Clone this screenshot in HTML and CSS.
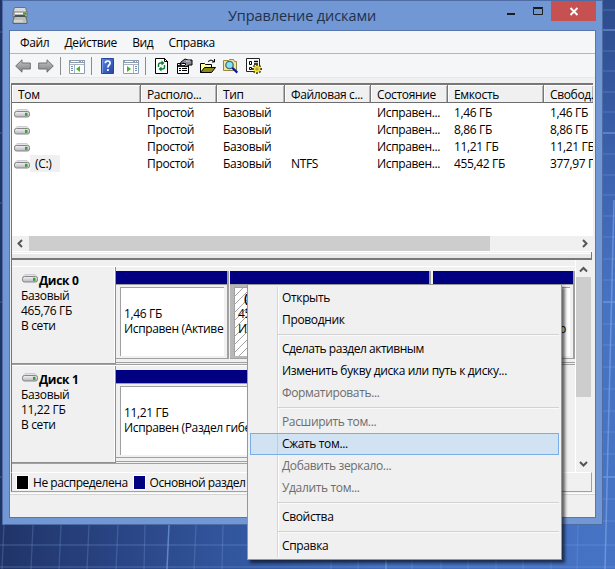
FILE: index.html
```html
<!DOCTYPE html>
<html lang="ru">
<head>
<meta charset="utf-8">
<title>Управление дисками</title>
<link rel="stylesheet" href="styles.css">
</head>
<body>
<svg width="0" height="0" class="defs">
  <defs>
    <linearGradient id="metal" x1="0" y1="0" x2="0" y2="1"><stop offset="0" stop-color="#f4f4f6"/><stop offset="1" stop-color="#b4b4ba"/></linearGradient>
    <linearGradient id="arrow" x1="0" y1="0" x2="0" y2="1"><stop offset="0" stop-color="#c8c8c8"/><stop offset="1" stop-color="#7c7c7c"/></linearGradient>
    <linearGradient id="help" x1="0" y1="0" x2="1" y2="1"><stop offset="0" stop-color="#5c86e0"/><stop offset="1" stop-color="#2444a4"/></linearGradient>
    <symbol id="drive" viewBox="0 0 16 10">
      <path d="M3 1.5h10l2.5 3H.5z" fill="#e4e4e5" stroke="#c4c4c6" stroke-width=".8"/>
      <rect x=".5" y="3.500" width="15" height="5.500" rx="2" fill="url(#metal)" stroke="#85858a"/>
      <rect x="11" y="4.800" width="2.500" height="3" fill="#2fa52a"/>
    </symbol>
    <pattern id="hatch" width="8" height="8" patternUnits="userSpaceOnUse"><path d="M-1 9L9-1M-1 1L1-1M7 9l2-2" stroke="#8c8c8c" stroke-width=".8"/></pattern>
  </defs>
</svg>
<div class="desktop">
  <svg class="wallpaper" width="615" height="569" viewBox="0 0 615 569" fill="none">
    <g stroke="#7ba0e0" stroke-opacity=".28" stroke-width="1.3">
      <path d="M4 525l-2 44M33 525l-2 44M61 525l-2 44M89 525l-2 44M118 525l-2 44M145 525l-1 44M196 525l-2 44M223 525l-1 44M331 559v10M358 559v10M412 559v10M441 559v10M468 559v10M496 559v10M523 559v10M551 559v10M578 525l-1 44"/>
      <path d="M603 10h12M603 51h12M603 71h12M603 92h12M603 112h12M603 154h12M603 175h12M603 195h12M603 216h12M603 237h12M603 259h12M603 280h12M603 324h12M603 345h12M603 367h12M603 389h12M603 411h12M603 432h12M603 454h12M603 499h12M603 521h12M0 545h615M0 567h615M0 32h2M0 133h2M0 203h2M0 302h2M0 477h2"/>
    </g>
    <path d="M169 525l-2 44M386 560v9M614 200l-9 369M603 30h12M603 133h12M603 302h12M603 477h12" stroke="#83abe9" stroke-opacity=".6" stroke-width="1.5"/>
  </svg>
  <main class="window">
    <header class="titlebar">
      <svg class="app-icon" width="16" height="17" viewBox="0 0 16 17">
        <path d="M2.500.5h11l1.500 5v4H1v-4z" fill="#d7dad9" stroke="#6c7471"/><path d="M2 5h12v3H2z" fill="#f8f8f8" stroke="#777"/>
        <path d="M11 5.500h3v2h-3z" fill="#28a824"/><path d="M2.500 9.500h11l1.500 4v3H1v-3z" fill="#b8bebb" stroke="#5e6663"/><path d="M3 8h10v2H3z" fill="#4b5350"/><path d="M2 14h9" stroke="#eee"/>
      </svg>
      <h1>Управление дисками</h1>
      <div class="caption-buttons">
        <svg width="30" height="20" viewBox="0 0 30 20"><path d="M8 13h8" stroke="#1c1c1c" stroke-width="2"/></svg>
        <svg width="22" height="20" viewBox="0 0 22 20"><path d="M4.500 7.500h9v6h-9zM4 6.500h10" fill="none" stroke="#1c1c1c"/></svg>
        <svg class="close" width="45" height="20" viewBox="0 0 45 20"><path d="M19.500 7l7 7M26.500 7l-7 7" stroke="#fff" stroke-width="1.900"/></svg>
      </div>
    </header>
    <div class="client">
      <nav class="menubar"><span>Файл</span><span>Действие</span><span>Вид</span><span>Справка</span></nav>
      <div class="toolbar">
        <svg width="16" height="16" viewBox="0 0 16 16"><path d="M.7 8L7 1.800V5h8.300v6H7v3.200z" fill="url(#arrow)" stroke="#707070"/></svg>
        <svg class="t2" width="16" height="16" viewBox="0 0 16 16"><path d="M15.300 8L9 1.800V5H.7v6H9v3.200z" fill="url(#arrow)" stroke="#707070"/></svg>
        <i class="sep s1"></i>
        <svg class="t3" width="16" height="16" viewBox="0 0 16 16"><path d="M.5 2.500h15v13H.5z" fill="#fff" stroke="#8e9db0"/><path d="M0 2h16v3H0z" fill="#8e9db0"/><path d="M2 3.500h8M12 3.500h1M14 3.500h1" stroke="#fff"/><path d="M1 6.500h14M5.500 7v8" stroke="#a8b4c2"/><path d="M2 8.500h2M2 10.500h2M2 12.500h2" stroke="#6689b6"/><path d="M11 8v6l-4-3z" fill="#45b42b"/></svg>
        <i class="sep s2"></i>
        <svg class="t4" width="13" height="16" viewBox="0 0 13 16"><path d="M.5.5h12v15H.5z" fill="url(#help)" stroke="#2846a0"/><path d="M1.500 1v14" stroke="#7398e5"/><path d="M4.300 5.200Q4.500 3 6.800 3t2.300 2.100c0 1.700-2.200 1.900-2.200 4.300M6.900 11v2" fill="none" stroke="#fff" stroke-width="1.700"/></svg>
        <svg class="t5" width="16" height="16" viewBox="0 0 16 16"><path d="M.5 2.500h15v13H.5z" fill="#fff" stroke="#8e9db0"/><path d="M0 2h16v3H0z" fill="#8e9db0"/><path d="M2 3.500h8M12 3.500h1M14 3.500h1" stroke="#fff"/><path d="M1 6.500h14M10.500 7v8" stroke="#a8b4c2"/><path d="M12 8.500h2M12 10.500h2M12 12.500h2" stroke="#6689b6"/><path d="M4 8v6l4-3z" fill="#45b42b"/></svg>
        <i class="sep s3"></i>
        <svg class="t6" width="13" height="16" viewBox="0 0 13 16"><path d="M.5.5h9l3 3v12H.5z" fill="#fff" stroke="#000"/><path d="M9.500 0v3.500H13" fill="none" stroke="#000"/><path d="M3.500 9V7q0-2 2-2H7M9.500 7v2q0 2-2 2H6" fill="none" stroke="#088033" stroke-width="1.400"/><path d="M6.500 2.500v5l3-2.500zM6.500 8.500v5l-3-2.500z" fill="#088033"/></svg>
        <svg class="t7" width="16" height="16" viewBox="0 0 16 16"><path d="M.5 5.500h11v10H.5z" fill="#fff" stroke="#000"/><path d="M1 7h10v2H1z" fill="#222"/><path d="M2 10.500h2M5 10.500h5M2 12.500h2M5 12.500h5" stroke="#000"/><path d="M4 4l4-3 3 1h4v5h-3l-3 2-2-1 2-2-3-1-3 2z" fill="#888c99" stroke="#000"/><path d="M9 3h4" stroke="#ddd"/></svg>
        <svg class="t8" width="16" height="16" viewBox="0 0 16 16"><path d="M.5 14.500v-9h4l1 1h6v3" fill="#ffffa0" stroke="#000"/><path d="M.5 14.500l4-5h11l-4 5z" fill="#8c8b19" stroke="#000"/><path d="M8 3.500q3-3 6 0M14.500 1v3H12" fill="none" stroke="#000"/></svg>
        <svg class="t9" width="16" height="16" viewBox="0 0 16 16"><path d="M.5 2.500h5l1-1h4l1 2h2v9H.5z" fill="#f0e6a8" stroke="#9a8440"/><circle cx="6.500" cy="7" r="3.700" fill="#7fe6f2" stroke="#4a6a78" stroke-width="1.300"/><path d="M9.300 9.800l5 4.800" stroke="#0018a0" stroke-width="2.200"/></svg>
        <svg class="t10" width="16" height="16" viewBox="0 0 16 16"><path d="M.5.5h13v13H.5z" fill="#fff" stroke="#222"/><path d="M3.500 3.500h2v3h-2zM3.500 9.500h2v2h-2z" fill="none" stroke="#000"/><path d="M8 3.500h4M8 6h4" stroke="#000" stroke-width="1.300"/><path d="M11 6v10M6 11h10M7.500 7.500l7 7M14.500 7.500l-7 7" stroke="#4d4600" stroke-width="1.800"/><circle cx="11" cy="11" r="3.300" fill="#f4e13c"/><circle cx="11" cy="11" r="1.100" fill="#fff" stroke="#665900" stroke-width=".7"/></svg>
      </div>
      <section class="volumes">
        <div class="row head"><span>Том</span><span>Располо...</span><span>Тип</span><span>Файловая с...</span><span>Состояние</span><span>Емкость</span><span>Свобод...</span></div>
        <div class="row"><span class="vol"><svg width="16" height="10"><use href="#drive"/></svg></span><span>Простой</span><span>Базовый</span><span></span><span>Исправен...</span><span>1,46 ГБ</span><span>1,46 ГБ</span></div>
        <div class="row"><span class="vol"><svg width="16" height="10"><use href="#drive"/></svg></span><span>Простой</span><span>Базовый</span><span></span><span>Исправен...</span><span>8,86 ГБ</span><span>8,86 ГБ</span></div>
        <div class="row"><span class="vol"><svg width="16" height="10"><use href="#drive"/></svg></span><span>Простой</span><span>Базовый</span><span></span><span>Исправен...</span><span>11,21 ГБ</span><span>11,21 ГБ</span></div>
        <div class="row"><span class="vol"><svg width="16" height="10"><use href="#drive"/></svg><b>(C:)</b></span><span>Простой</span><span>Базовый</span><span>NTFS</span><span>Исправен...</span><span>455,42 ГБ</span><span>377,97 ГБ</span></div>
        <div class="hscroll">
          <svg width="17" height="15" viewBox="0 0 17 15"><path d="M10 4L6.500 7.500 10 11" fill="none" stroke="#555" stroke-width="2"/></svg>
          <i></i>
          <svg class="end" width="17" height="15" viewBox="0 0 17 15"><path d="M7 4l3.500 3.500L7 11" fill="none" stroke="#555" stroke-width="2"/></svg>
        </div>
      </section>
      <div class="splitter"></div>
      <section class="graph">
        <div class="disks">
          <article class="disk">
            <div class="info"><h2><svg width="16" height="10"><use href="#drive"/></svg>Диск 0</h2><p>Базовый</p><p>465,76 ГБ</p><p>В сети</p></div>
            <div class="parts">
              <div class="part p1"><div class="box"><p>1,46 ГБ</p><p>Исправен (Активен)</p></div></div>
              <div class="part p2"><div class="box"><svg class="hatching" width="192" height="68"><rect width="192" height="68" fill="url(#hatch)"/></svg><p class="name">(C:)</p><p>455,42 ГБ NTFS</p><p>Исправен (Загрузка)</p></div></div>
              <div class="part p3"><div class="box"><p>8,86 ГБ</p><p class="right">Исправен (Раздел р</p></div></div>
            </div>
          </article>
          <article class="disk short">
            <div class="info"><h2><svg width="16" height="10"><use href="#drive"/></svg>Диск 1</h2><p>Базовый</p><p>11,22 ГБ</p><p>В сети</p></div>
            <div class="parts"><div class="part whole"><div class="box"><p>11,21 ГБ</p><p>Исправен (Раздел гибернации)</p></div></div></div>
          </article>
        </div>
        <div class="vscroll">
          <svg width="16" height="17" viewBox="0 0 16 17"><path d="M4 11.500L7.500 8l3.500 3.500" fill="none" stroke="#555" stroke-width="2"/></svg>
          <i></i>
          <svg class="end" width="16" height="17" viewBox="0 0 16 17"><path d="M4 7l3.500 3.500L11 7" fill="none" stroke="#555" stroke-width="2"/></svg>
        </div>
      </section>
      <div class="legend"><i class="black"></i><span>Не распределена</span><i class="navy"></i><span>Основной раздел</span></div>
      <footer class="status"></footer>
    </div>
  </main>
  <div class="context">
    <a>Открыть</a><a>Проводник</a><hr>
    <a class="tight">Сделать раздел активным</a><a>Изменить букву диска или путь к диску...</a><a class="off">Форматировать...</a><hr>
    <a class="off">Расширить том...</a><a class="hot">Сжать том...</a><a class="off">Добавить зеркало...</a><a class="off">Удалить том...</a><hr>
    <a>Свойства</a><hr><a>Справка</a>
  </div>
</div>
</body>
</html>
```

FILE: styles.css
```css
* { box-sizing: border-box; }
body { margin: 0; font: 12px/15px "Open Sans", "Noto Sans", sans-serif; letter-spacing: -.35px; color: #000; }
h1, h2, p { margin: 0; font-size: inherit; font-weight: 400; }
svg { display: block; flex: none; }
i { display: block; flex: none; }
.defs { position: absolute; }
.desktop { position: relative; width: 615px; height: 569px; overflow: hidden; background: linear-gradient(90deg, #203468 0, #2b4788 22%, #355ba5 43%, #426dbd 64%, #4773c5 100%); }
.desktop::before { content: ""; position: absolute; top: 0; right: 0; width: 13px; height: 300px; background: linear-gradient(#2d4b8c, #3b60ac 50%, #4773c500); }
.wallpaper { position: absolute; inset: 0; }
.window { position: relative; width: 601px; height: 525px; margin-left: 2px; padding: 0 6px 6px; background: #7197d5; border: 1px solid #4e6da4; }
.titlebar { display: flex; height: 29px; padding-left: 3px; }
.app-icon { margin-top: 6px; }
.titlebar h1 { flex: 1; padding: 5px 0 0 200px; font-size: 14.5px; line-height: 20px; letter-spacing: -.1px; color: #23304a; white-space: nowrap; }
.caption-buttons { display: flex; height: 20px; }
.close { background: #c75050; }
.client { height: 488px; border: 1px solid #5676ad; background: #f0f0f0; display: flex; flex-direction: column; }
.menubar { display: flex; gap: 15.2px; height: 23px; flex: none; padding: 4px 0 0 10px; background: #f5f6f7; border-bottom: 1px solid #b4b6b8; }
.toolbar { display: flex; align-items: center; height: 24px; flex: none; padding: 1px 0 0 5px; background: #f5f6f7; border-bottom: 1px solid #e8e8e8; }
.sep { width: 1px; height: 18px; background: #8c8c8c; }
.t2 { margin-left: 7px; } .s1 { margin-left: 6px; } .t3 { margin-left: 8px; } .s2 { margin-left: 6px; } .t4 { margin-left: 9px; }
.t5 { margin-left: 9px; } .s3 { margin-left: 6px; } .t6 { margin-left: 9px; } .t7 { margin-left: 9px; } .t8, .t9, .t10 { margin-left: 7px; }
.volumes { display: flex; flex-direction: column; flex: none; height: 169px; margin: 5px 2px 0 1px; background: #fff; border: solid #777; border-width: 2px 0 0 1px; }
.row { display: grid; grid-template-columns: 129px 76px 68px 86px 77px 96px 50px; height: 17px; overflow: hidden; flex: none; }
.row span { padding: 1px 0 0 6px; white-space: nowrap; overflow: hidden; height: 17px; }
.head { height: 18px; background: #f0f0f0; border-bottom: 1px solid #6d6d6d; margin-bottom: 1px; }
.head span { padding-top: 2px; border: solid #777; border-width: 0 1px 0 0; box-shadow: inset 1px 1px #fff, inset -1px 0 #b5b5b5; }
.row .vol { display: flex; padding: 0 0 0 2px; align-items: center; }
.vol b { height: 17px; width: 30px; padding: 1px 0 0 5px; font-weight: 400; background: #f0f0f0; }
.hscroll { display: flex; margin: auto 0 1px; height: 15px; background: #f0f0f0; }
.hscroll i { width: 461px; background: #cdcdcd; }
.end { margin-left: auto; }
.splitter { flex: none; height: 8px; margin: 0 3px 0 1px; background: #f0f0f0; border: solid #777; border-width: 0 1px 2px; box-shadow: inset 0 -4px #e8e8e8, inset 0 -5px #fff; }
.graph { display: flex; flex: none; height: 212px; margin: 0 3px 0 1px; border-left: 1px solid #777; }
.disks { width: 565px; padding-top: 6px; }
.disk { display: flex; height: 99px; border-top: 1px solid #fff; border-bottom: 1px solid #a0a0a0; }
.short { width: 440px; }
.info { flex: none; width: 104px; height: 97px; padding: 5px 0 0 9px; border: solid #909090; border-width: 0 1px 1px 0; box-shadow: inset -1px 0 #fff; }
.info h2 { display: flex; align-items: flex-start; font-weight: 700; padding-top: 1px; height: 16px; letter-spacing: -.3px; }
.info h2 svg { margin: 0 1px 0 1px; }
.parts { display: flex; flex: 1; padding-top: 4px; height: 96px; border-bottom: 1px solid #a0a0a0; }
.part { flex: none; height: 88px; border: solid #a0a0a0; border-width: 0 2px 1px 0; padding: 16px 3px 0 4px; background: linear-gradient(#000080 13px, #a0a0a0 13px 14px, transparent 14px) #f0f0f0; }
.p1 { width: 113px; } .p2 { width: 201px; margin-left: 1px; background-color: #b8b8b8; } .p3 { width: 142px; margin-left: 2px; } .whole { width: 330px; }
.box { position: relative; height: 69px; padding: 18px 0 0 3px; background: #fff; border: solid #a0a0a0; border-width: 1px 0 0 1px; overflow: hidden; white-space: nowrap; }
.box p { position: relative; }
.p2 .box { padding-top: 3px; }
.p2 .box .name { font-weight: 700; padding-left: 6px; }
.box .right { text-align: right; padding-right: 4px; }
.hatching { position: absolute; inset: 0; }
.vscroll { display: flex; flex-direction: column; width: 17px; height: 212px; border-left: 1px solid #fff; }
.vscroll i { height: 120px; width: 15px; background: #cdcdcd; }
.vscroll .end { margin: auto 0 0; }
.legend { display: flex; align-items: center; flex: none; height: 20px; margin: 0 3px 0 1px; padding-left: 5px; border: 1px solid #a0a0a0; border-top-color: #fff; border-left-color: #777; white-space: nowrap; letter-spacing: -.46px; }
.legend i { width: 11px; height: 13px; outline: 1px solid #fff; }
.black { background: #000; } .navy { background: #000080; margin-left: 6px; }
.legend span { margin-left: 5px; }
.status { flex: 1; margin-top: 1px; border-top: 1px solid #fff; box-shadow: inset 0 1px #d5d5d5; }
.context { position: absolute; left: 247px; top: 284px; width: 315px; height: 276px; padding: 2px; background: linear-gradient(90deg, transparent 29px, #d5d5d5 29px 30px, #fff 30px 31px, transparent 31px) 0 2px / 100% 270px no-repeat #f0f0f0; border: 1px solid #979797; box-shadow: 3px 3px 3px #0009; }
.context a { display: block; height: 22px; padding: 3px 0 0 32px; white-space: nowrap; }
.context .tight { letter-spacing: -.47px; }
.context hr { height: 7px; margin: 0 0 0 28px; border: 0; background: linear-gradient(transparent 3px, #d2d2d2 3px 4px, #fafafa 4px 5px, transparent 5px); }
.context .off { color: #6d6d6d; }
.context .hot { padding: 2px 0 0 31px; border: 1px solid #78aee5; background: linear-gradient(90deg, transparent 26px, #b8cfe4 26px 27px, transparent 27px) #d1e2f2; }
```
